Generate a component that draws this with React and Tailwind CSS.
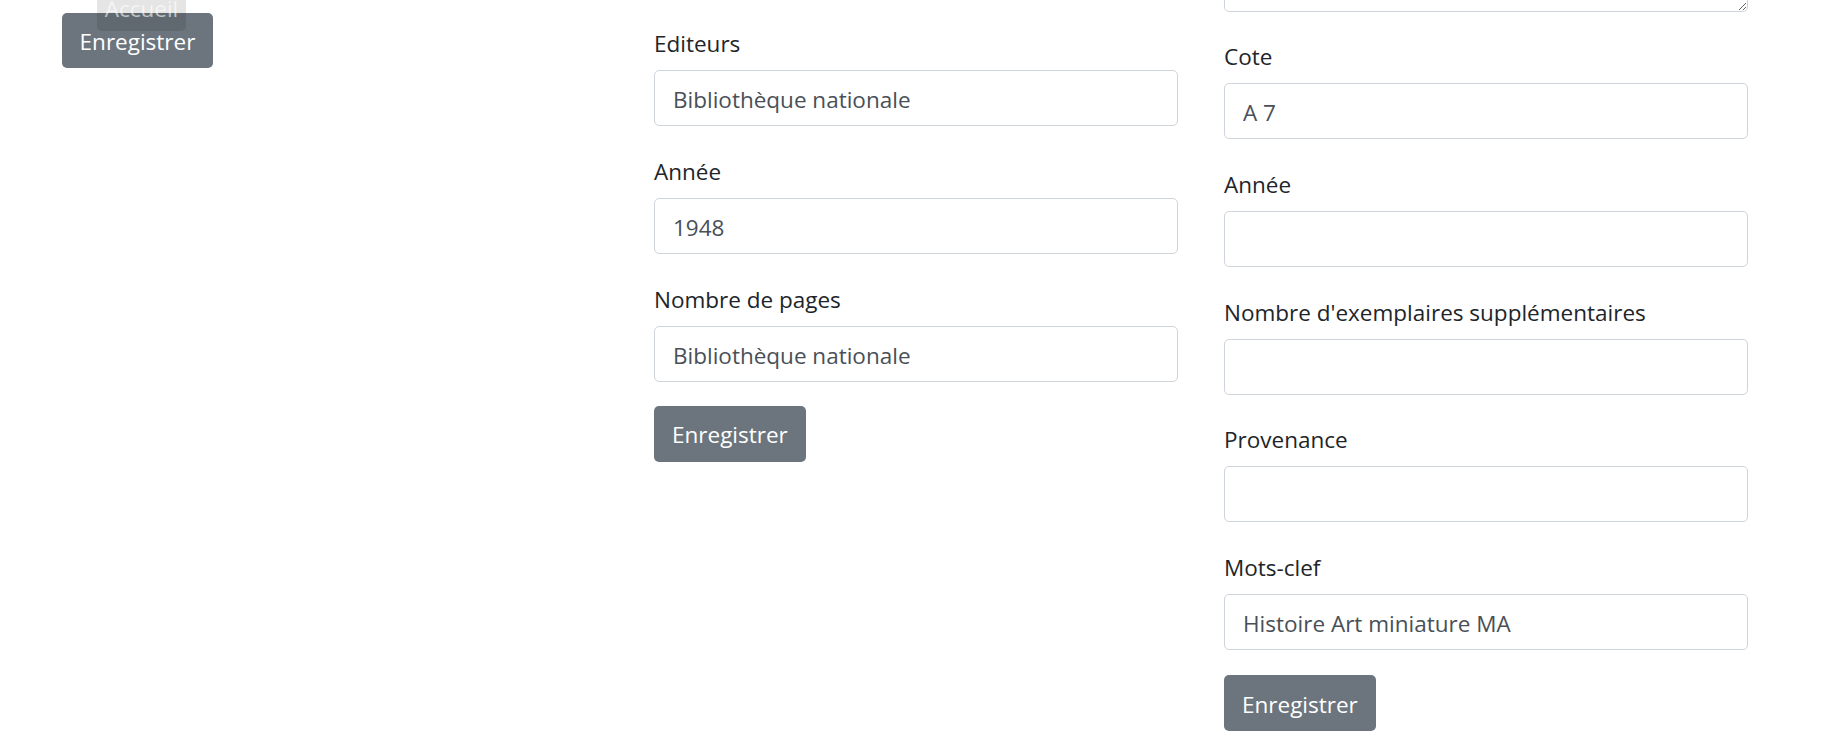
import React from "react";

const font = { fontFamily: '"Open Sans", "Noto Sans", sans-serif' };

function Field({ label, value, last }) {
  return (
    <div className={last ? "flex flex-col" : "flex flex-col mb-[27.75px]"}>
      <label className="block text-[22.5px] leading-[34px] mb-[9px] pt-[1px] text-[#212529]">{label}</label>
      <input
        type="text"
        defaultValue={value}
        className="w-full h-[56px] px-[18px] pt-[3px] text-[22.5px] text-[#495057] bg-white border border-[#ced4da] rounded-[5px] outline-none"
        style={font}
      />
    </div>
  );
}

function Btn({ children }) {
  return (
    <button className="self-start h-[56px] px-[18px] pt-[3px] text-[22.5px] text-white bg-[#6c757d] rounded-[5px]" style={font}>
      {children}
    </button>
  );
}

export default function App() {
  return (
    <div className="relative w-[1829px] h-[744px] overflow-hidden bg-white" style={font}>
      <div className="grid grid-cols-[608px_524px_524px] gap-x-[46px]">
        <div className="pl-[62px] pt-[13px]">
          <button className="h-[55px] w-[151px] pt-[3px] text-[22.5px] text-white bg-[#6c757d] rounded-[5px]" style={font}>
            Enregistrer
          </button>
        </div>

        <div className="flex flex-col pt-[26px]">
          <Field label="Editeurs" value="Bibliothèque nationale" />
          <Field label="Année" value="1948" />
          <Field label="Nombre de pages" value="Bibliothèque nationale" last />
          <div className="mt-[24px]">
            <Btn>Enregistrer</Btn>
          </div>
        </div>

        <div className="flex flex-col">
          <textarea
            defaultValue=""
            className="block w-full h-[100px] -mt-[88px] mb-[27px] border border-[#ced4da] rounded-[5px] bg-white outline-none"
          />
          <Field label="Cote" value="A 7" />
          <Field label="Année" value="" />
          <Field label="Nombre d'exemplaires supplémentaires" value="" />
          <Field label="Provenance" value="" />
          <Field label="Mots-clef" value="Histoire Art miniature MA" last />
          <div className="mt-[25px]">
            <Btn>Enregistrer</Btn>
          </div>
        </div>
      </div>

      <div className="absolute left-[97px] top-[-14px] w-[89px] h-[45px] rounded-b-[5px] bg-black/10 text-white/60 text-[22.5px] leading-[32px] pt-[7px] text-center">
        Accueil
      </div>
    </div>
  );
}
